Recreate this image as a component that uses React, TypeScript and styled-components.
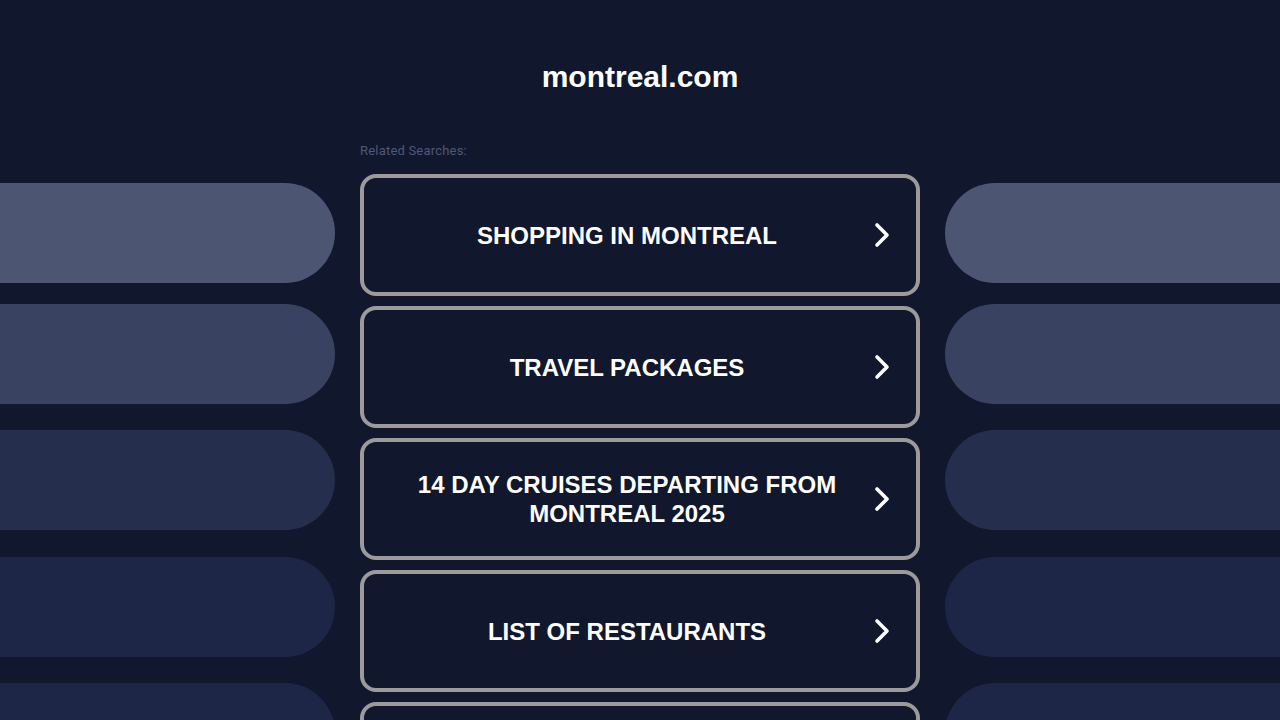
import styled, { createGlobalStyle } from 'styled-components'

const GlobalStyle = createGlobalStyle`
  html, body {
    margin: 0;
    padding: 0;
    background: #11172d;
    overflow: hidden;
  }
  body {
    font-family: 'Liberation Sans', Arial, sans-serif;
  }
`

const Page = styled.div`
  width: 1280px;
  height: 720px;
  display: grid;
  grid-template-columns: 335px 1fr 335px;
  overflow: hidden;
`

const Side = styled.div<{ $right?: boolean }>`
  display: flex;
  flex-direction: column;
  align-items: ${(p) => (p.$right ? 'flex-end' : 'flex-start')};
  padding-top: 183px;
`

const Pill = styled.div<{ $color: string; $gap: number; $right?: boolean }>`
  width: 335px;
  height: 100px;
  flex-shrink: 0;
  margin-bottom: ${(p) => p.$gap}px;
  background: ${(p) => p.$color};
  border-radius: ${(p) => (p.$right ? '50px 0 0 50px' : '0 50px 50px 0')};
`

const Center = styled.main`
  display: flex;
  flex-direction: column;
  align-items: center;
`

const Title = styled.h1`
  margin: 59px 0 0;
  height: 36px;
  font-size: 30px;
  line-height: 36px;
  font-weight: 700;
  color: #ffffff;
`

const Column = styled.div`
  width: 560px;
  margin-top: 49px;
  display: flex;
  flex-direction: column;
`

const Label = styled.div`
  font-family: Roboto, 'Open Sans', sans-serif;
  font-size: 13px;
  line-height: 14px;
  letter-spacing: 0.2px;
  color: #4f5878;
  margin-bottom: 16px;
`

const List = styled.div`
  display: flex;
  flex-direction: column;
  gap: 10px;
`

const Card = styled.a`
  box-sizing: border-box;
  height: 122px;
  flex-shrink: 0;
  border: 4px solid #9b9b9b;
  border-radius: 16px;
  background: #11172d;
  display: flex;
  align-items: center;
  padding: 0 12px 0 30px;
  text-decoration: none;
  cursor: pointer;
`

const CardText = styled.span`
  flex: 1;
  text-align: center;
  color: #ffffff;
  font-size: 24px;
  font-weight: 700;
  line-height: 29px;
  text-transform: uppercase;
`

const Arrow = styled.span`
  width: 44px;
  display: flex;
  justify-content: center;
  align-items: center;
`

const Chevron = () => (
  <svg width="18" height="26" viewBox="0 0 18 26" fill="none">
    <path d="M4 3l10 10-10 10" stroke="#ffffff" strokeWidth="3.6" strokeLinecap="round" strokeLinejoin="round" />
  </svg>
)

const pills = [
  { color: '#4c5572', gap: 21 },
  { color: '#3a4261', gap: 26 },
  { color: '#262e4e', gap: 27 },
  { color: '#1e2647', gap: 26 },
  { color: '#1e2648', gap: 26 },
]

const searches = [
  'Shopping in Montreal',
  'Travel Packages',
  '14 Day Cruises Departing from Montreal 2025',
  'List of Restaurants',
  'Hotels in Montreal',
]

export default function App() {
  return (
    <>
      <GlobalStyle />
      <Page>
        <Side>
          {pills.map((p, i) => (
            <Pill key={i} $color={p.color} $gap={p.gap} />
          ))}
        </Side>
        <Center>
          <Title>montreal.com</Title>
          <Column>
            <Label>Related Searches:</Label>
            <List>
              {searches.map((s) => (
                <Card key={s}>
                  <CardText>{s}</CardText>
                  <Arrow>
                    <Chevron />
                  </Arrow>
                </Card>
              ))}
            </List>
          </Column>
        </Center>
        <Side $right>
          {pills.map((p, i) => (
            <Pill key={i} $color={p.color} $gap={p.gap} $right />
          ))}
        </Side>
      </Page>
    </>
  )
}
